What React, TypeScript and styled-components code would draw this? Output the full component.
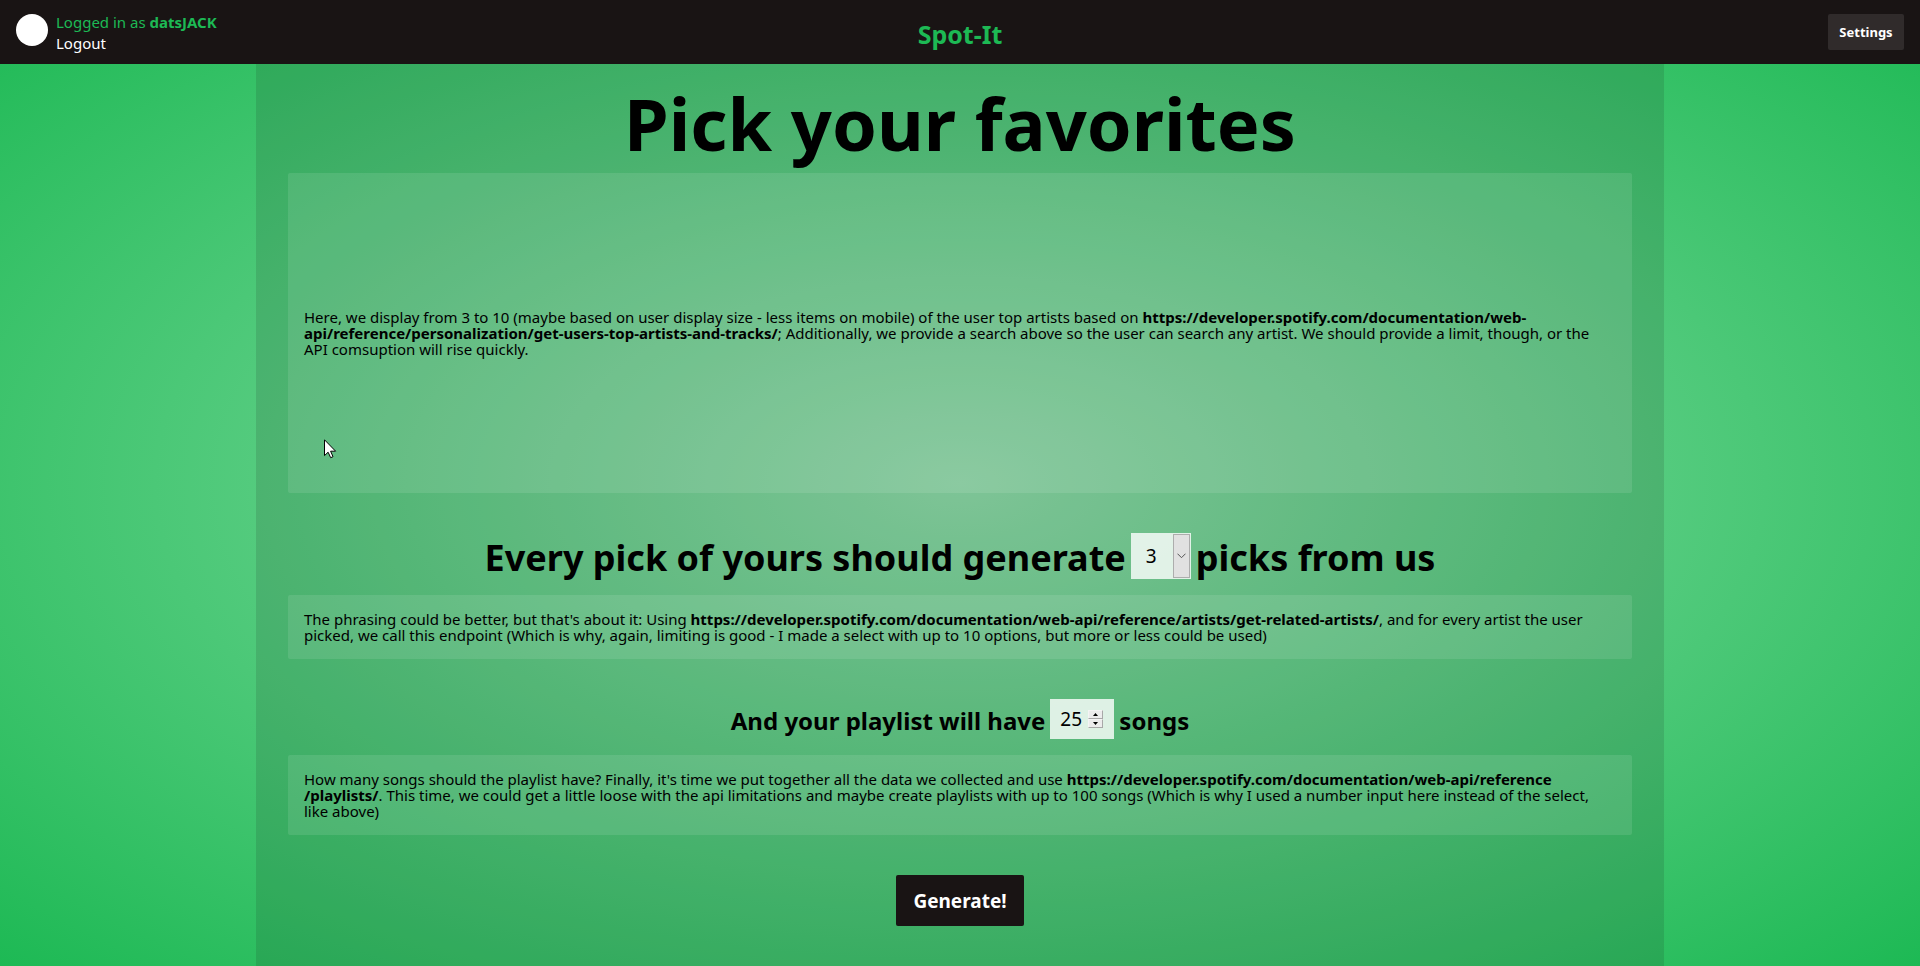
import React, { useState } from "react";
import styled, { createGlobalStyle } from "styled-components";

const GlobalStyle = createGlobalStyle`
  *, *::before, *::after { box-sizing: border-box; }
  html, body, #root { min-height: 100vh; }
  body {
    margin: 0;
    font-family: "Segoe UI", "Noto Sans", "Open Sans", sans-serif;
    font-size: 15px;
    line-height: 16px;
    color: #000;
    background: radial-gradient(#8edeaa, #1db954) no-repeat;
  }
`;

const Page = styled.div`
  display: flex;
  flex-direction: column;
  min-height: 100vh;
`;

const Header = styled.header`
  display: grid;
  grid-template-columns: 1fr auto 1fr;
  align-items: center;
  height: 64px;
  padding: 0 16px;
  background: #191414;
`;

const Account = styled.div`
  display: flex;
  align-items: center;
  gap: 8px;
  color: #1db954;
`;

const Avatar = styled.div`
  width: 32px;
  height: 32px;
  margin-bottom: 4px;
  border-radius: 50%;
  background: #fff;
`;

const AccountText = styled.div`
  display: flex;
  flex-direction: column;
  padding-top: 2px;
  line-height: 21px;
`;

const LogoutLink = styled.a`
  color: #fff;
  text-decoration: none;
`;

const Brand = styled.div`
  padding-top: 4px;
  color: #1db954;
  font-size: 25px;
  line-height: 32px;
  font-weight: 700;
`;

const Button = styled.button<{ $large?: boolean }>`
  border: 0;
  border-radius: 2px;
  padding: 0;
  min-width: ${(p) => (p.$large ? "128px" : "76px")};
  height: ${(p) => (p.$large ? "51px" : "36px")};
  background: ${(p) => (p.$large ? "#191414" : "#302b2b")};
  color: #fff;
  font-family: Tahoma, "Noto Sans", sans-serif;
  font-size: ${(p) => (p.$large ? "19px" : "13px")};
  font-weight: 700;
`;

const Actions = styled.div<{ $align: string }>`
  display: flex;
  justify-content: ${(p) => p.$align};
`;

const Main = styled.main`
  flex: 1;
  display: flex;
  flex-direction: column;
  gap: 40px;
  width: 100%;
  max-width: 1408px;
  margin: 0 auto;
  padding: 16px 32px 40px;
  background: rgba(25, 20, 20, 0.13);
`;

const Section = styled.section`
  display: flex;
  flex-direction: column;
`;

const Title = styled.h1`
  margin: 0 0 16px;
  padding-top: 9px;
  font-size: 72px;
  line-height: 68px;
  text-align: center;
`;

const Question = styled.h2<{ $small?: boolean }>`
  display: flex;
  align-items: center;
  justify-content: center;
  gap: 5px;
  margin: 0 0 16px;
  font-size: ${(p) => (p.$small ? "24px" : "36px")};
  line-height: 36px;

  > label, > span:last-child { padding-top: 4px; }
`;

const Panel = styled.div<{ $tall?: boolean }>`
  position: relative;
  display: flex;
  flex-direction: column;
  justify-content: center;
  min-height: ${(p) => (p.$tall ? "320px" : "0")};
  padding: 16px;
  border-radius: 2px;
  background: rgba(255, 255, 255, 0.1);
`;

const Paragraph = styled.p`
  margin: 0;
`;

const Pointer = styled.svg`
  position: absolute;
  left: 36px;
  top: 266px;
  pointer-events: none;
`;

const Field = styled.span`
  position: relative;
  display: flex;
`;

const Select = styled.select`
  appearance: none;
  width: 60px;
  height: 46px;
  padding: 0 15px;
  border: 0;
  border-radius: 0;
  background: rgba(255, 255, 255, 0.8);
  color: #000;
  font: 400 19px "Segoe UI", "Noto Sans", sans-serif;
`;

const SelectArrow = styled.span`
  position: absolute;
  top: 1px;
  right: 1px;
  bottom: 1px;
  width: 17px;
  display: flex;
  align-items: center;
  justify-content: center;
  border: 1px solid #adadad;
  background: #e1e1e1;
  pointer-events: none;
`;

const NumberInput = styled.input`
  appearance: textfield;
  width: 64px;
  height: 40px;
  padding: 0 10px;
  border: 0;
  background: rgba(255, 255, 255, 0.8);
  color: #000;
  font: 400 19px "Segoe UI", "Noto Sans", sans-serif;
  &::-webkit-inner-spin-button { appearance: none; margin: 0; }
`;

const Spinner = styled.span`
  position: absolute;
  top: 11px;
  right: 11px;
  display: flex;
  flex-direction: column;
`;

const SpinButton = styled.button`
  display: flex;
  align-items: center;
  justify-content: center;
  width: 15px;
  height: 9px;
  padding: 0;
  border: 1px solid;
  border-color: #f4f4f4 #a8a8a8 #a8a8a8 #f4f4f4;
  background: #ececec;
  color: #000;
`;

const artistsUrl = "https://developer.spotify.com/documentation/web-api/reference/artists/get-related-artists/";

export default function App() {
  const [picks, setPicks] = useState(3);
  const [songs, setSongs] = useState(25);
  return (
    <Page>
      <GlobalStyle />
      <Header>
        <Account>
          <Avatar />
          <AccountText>
            <span>Logged in as <strong>datsJACK</strong></span>
            <LogoutLink href="#logout">Logout</LogoutLink>
          </AccountText>
        </Account>
        <Brand>Spot-It</Brand>
        <Actions $align="flex-end">
          <Button type="button">Settings</Button>
        </Actions>
      </Header>
      <Main>
        <Section>
          <Title>Pick your favorites</Title>
          <Panel $tall>
            <Paragraph>
              Here, we display from 3 to 10 (maybe based on user display size - less items on mobile) of the user top artists based on{" "}
              <strong>https://developer.spotify.com/documentation/web-<wbr />api/reference/personalization/get-users-top-artists-and-tracks/</strong>; Additionally,
              we provide a search above so the user can search any artist. We should provide a limit, though, or the API&nbsp;comsuption will rise quickly.
            </Paragraph>
            <Pointer width="13" height="20" viewBox="0 0 13 20" aria-hidden="true">
              <path d="M.5 .8V16.6L4.1 13.2L6.7 18.7L9 17.7L6.6 12.2H11.6Z" fill="#fff" stroke="#000" />
            </Pointer>
          </Panel>
        </Section>
        <Section>
          <Question>
            <label htmlFor="picks">Every pick of yours should generate</label>
            <Field>
              <Select id="picks" value={picks} onChange={(e) => setPicks(Number(e.target.value))}>
                {[1, 2, 3, 4, 5, 6, 7, 8, 9, 10].map((n) => (
                  <option key={n} value={n}>{n}</option>
                ))}
              </Select>
              <SelectArrow>
                <svg width="9" height="6" viewBox="0 0 9 6" fill="none" stroke="#555">
                  <path d="M.5 .7L4.5 4.7L8.5 .7" />
                </svg>
              </SelectArrow>
            </Field>
            <span>picks from us</span>
          </Question>
          <Panel>
            <Paragraph>
              The phrasing could be better, but that's about it: Using <strong>{artistsUrl}</strong>, and for every artist the user
              picked, we call this endpoint (Which is why, again, limiting is good - I made a select with up to 10 options, but more or less could be used)
            </Paragraph>
          </Panel>
        </Section>
        <Section>
          <Question as="h3" $small>
            <label htmlFor="songs">And your playlist will have</label>
            <Field>
              <NumberInput id="songs" type="number" min={1} max={100} value={songs} onChange={(e) => setSongs(Number(e.target.value))} />
              <Spinner>
                <SpinButton type="button" aria-label="More songs" onClick={() => setSongs(Math.min(100, songs + 1))}>
                  <svg width="5" height="3" viewBox="0 0 5 3"><path d="M0 3L2.5 0L5 3Z" /></svg>
                </SpinButton>
                <SpinButton type="button" aria-label="Fewer songs" onClick={() => setSongs(Math.max(1, songs - 1))}>
                  <svg width="5" height="3" viewBox="0 0 5 3"><path d="M0 0L2.5 3L5 0Z" /></svg>
                </SpinButton>
              </Spinner>
            </Field>
            <span>songs</span>
          </Question>
          <Panel>
            <Paragraph>
              How many songs should the playlist have? Finally, it's time we put together all the data we collected and use{" "}
              <strong>https://developer.spotify.com/documentation/web-api/reference<wbr />/playlists/</strong>. This time, we could get a
              little loose with the api limitations and maybe create playlists with up to 100 songs (Which is why I used a number input here instead of the select, like&nbsp;above)
            </Paragraph>
          </Panel>
        </Section>
        <Actions $align="center">
          <Button type="button" $large>Generate!</Button>
        </Actions>
      </Main>
    </Page>
  );
}
